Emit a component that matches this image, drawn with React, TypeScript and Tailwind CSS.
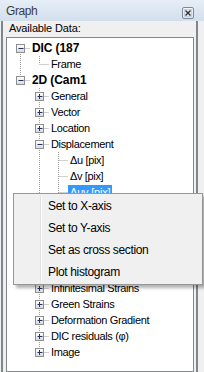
import React from 'react';

interface TreeNode {
  label: string;
  bold?: boolean;
  selected?: boolean;
  expanded?: boolean;
  children?: TreeNode[];
}

interface FlatRow {
  node: TreeNode;
  level: number;
  hasNext: boolean;
  isFirst: boolean;
  ancestorsNext: boolean[];
}

const collapsed = (label: string): TreeNode => ({ label, children: [{ label: '' }] });

const tree: TreeNode[] = [
  {
    label: 'DIC (187',
    bold: true,
    expanded: true,
    children: [{ label: 'Frame' }],
  },
  {
    label: '2D (Cam1',
    bold: true,
    expanded: true,
    children: [
      collapsed('General'),
      collapsed('Vector'),
      collapsed('Location'),
      {
        label: 'Displacement',
        expanded: true,
        children: [
          { label: 'Δu [pix]' },
          { label: 'Δv [pix]' },
          { label: 'Δuv [pix]', selected: true },
          { label: 'Δu [mm]' },
          { label: 'Δv [mm]' },
        ],
      },
      collapsed('Velocity'),
      collapsed('Rotation'),
      collapsed('Engineering Strains'),
      collapsed('Infinitesimal Strains'),
      collapsed('Green Strains'),
      collapsed('Deformation Gradient'),
      collapsed('DIC residuals (φ)'),
      collapsed('Image'),
    ],
  },
];

function flatten(nodes: TreeNode[], level = 0, ancestorsNext: boolean[] = []): FlatRow[] {
  const out: FlatRow[] = [];
  nodes.forEach((node, i) => {
    const hasNext = i < nodes.length - 1;
    out.push({ node, level, hasNext, isFirst: level === 0 && i === 0, ancestorsNext });
    if (node.expanded && node.children) {
      out.push(...flatten(node.children, level + 1, [...ancestorsNext, hasNext]));
    }
  });
  return out;
}

const LINE = '#a0a0a0';

function TreeRow({ row }: { row: FlatRow }) {
  const cx = (l: number) => 13 + 19 * l + 0.5;
  const textX = 25 + 19 * row.level;
  const x = cx(row.level);
  const hasKids = !!row.node.children;
  const open = !!row.node.expanded;

  return (
    <div className="flex h-4 items-center whitespace-nowrap">
      <svg width={textX} height={16} className="shrink-0">
        <defs>
          <linearGradient id="box" x1="0" y1="0" x2="0" y2="1">
            <stop offset="0" stopColor="#ffffff" />
            <stop offset="1" stopColor="#d8d8d8" />
          </linearGradient>
        </defs>
        {row.ancestorsNext.map((next, l) =>
          next ? (
            <line key={l} x1={cx(l)} y1={0} x2={cx(l)} y2={16} stroke={LINE} strokeDasharray="1 1" />
          ) : null,
        )}
        {!row.isFirst && <line x1={x} y1={0} x2={x} y2={8} stroke={LINE} strokeDasharray="1 1" />}
        {row.hasNext && <line x1={x} y1={8} x2={x} y2={16} stroke={LINE} strokeDasharray="1 1" />}
        <line x1={x} y1={8.5} x2={textX - 2} y2={8.5} stroke={LINE} strokeDasharray="1 1" />
        {hasKids && (
          <g>
            <rect x={x - 4} y={4.5} width={8} height={8} fill="url(#box)" stroke="#8f8f8f" />
            <line x1={x - 2} y1={8.5} x2={x + 3} y2={8.5} stroke="#1f3560" />
            {!open && <line x1={x} y1={6} x2={x} y2={11} stroke="#1f3560" />}
          </g>
        )}
      </svg>
      {row.node.bold ? (
        <span className="text-[12px] font-bold leading-4 tracking-[-0.1px]">{row.node.label}</span>
      ) : row.node.selected ? (
        <span className="-ml-[2px] bg-[#3399ff] px-[2px] text-[11px] leading-[15px] tracking-[-0.2px] text-white">
          {row.node.label}
        </span>
      ) : (
        <span className="text-[11px] leading-4 tracking-[-0.35px]">{row.node.label}</span>
      )}
    </div>
  );
}

function CloseButton() {
  return (
    <svg width={12} height={12} className="mt-[7px] shrink-0">
      <defs>
        <linearGradient id="cb" x1="0" y1="0" x2="0" y2="1">
          <stop offset="0" stopColor="#f5f8fb" />
          <stop offset="1" stopColor="#dbe3ee" />
        </linearGradient>
      </defs>
      <rect x={0.5} y={0.5} width={11} height={11} rx={1.5} fill="url(#cb)" stroke="#7c889b" />
      <rect x={2.5} y={2.5} width={7} height={7} fill="none" stroke="#c7d0dc" />
      <path d="M3.5 3.5 L8.5 8.5 M8.5 3.5 L3.5 8.5" stroke="#2f2f2f" strokeWidth={1.4} />
    </svg>
  );
}

const menuItems = ['Set to X-axis', 'Set to Y-axis', 'Set as cross section', 'Plot histogram'];

export default function App() {
  const rows = flatten(tree);

  return (
    <div className="relative h-[372px] w-[204px] overflow-hidden bg-[#f0f0f0] font-['Liberation_Sans',Arial,sans-serif] text-black">
      <div className="flex h-[21px] items-start justify-between bg-gradient-to-b from-[#e6eef7] to-[#d3dfed] pl-[6px] pr-[10px]">
        <span className="pt-[4px] text-[12px] leading-[14px] tracking-[-0.4px] text-[#3c3c3c]">Graph</span>
        <CloseButton />
      </div>

      <div className="ml-px flex h-[351px] w-[197px] flex-col border-x-2 border-[#80868e] pt-px">
        <div className="pl-[6px] text-[11px] leading-[13px] tracking-[-0.15px]">Available Data:</div>
        <div className="ml-[3px] mt-[2px] w-[188px] flex-1 border border-[#828790] bg-white pt-[2px]">
          {rows.map((row, i) => (
            <TreeRow key={i} row={row} />
          ))}
        </div>
      </div>

      <div className="absolute left-[13px] top-[193px] w-[190px] border border-[#979797] bg-[#f0f0f0] py-px shadow-[3px_3px_3px_rgba(0,0,0,0.3)]">
        <div className="absolute bottom-[2px] left-[26px] top-[2px] w-px bg-[#e0e0e0]" />
        <div className="absolute bottom-[2px] left-[27px] top-[2px] w-px bg-white" />
        {menuItems.map(item => (
          <div key={item} className="relative h-[22px] pl-[34px] text-[12px] leading-[22px] tracking-[-0.35px]">
            {item}
          </div>
        ))}
      </div>
    </div>
  );
}
